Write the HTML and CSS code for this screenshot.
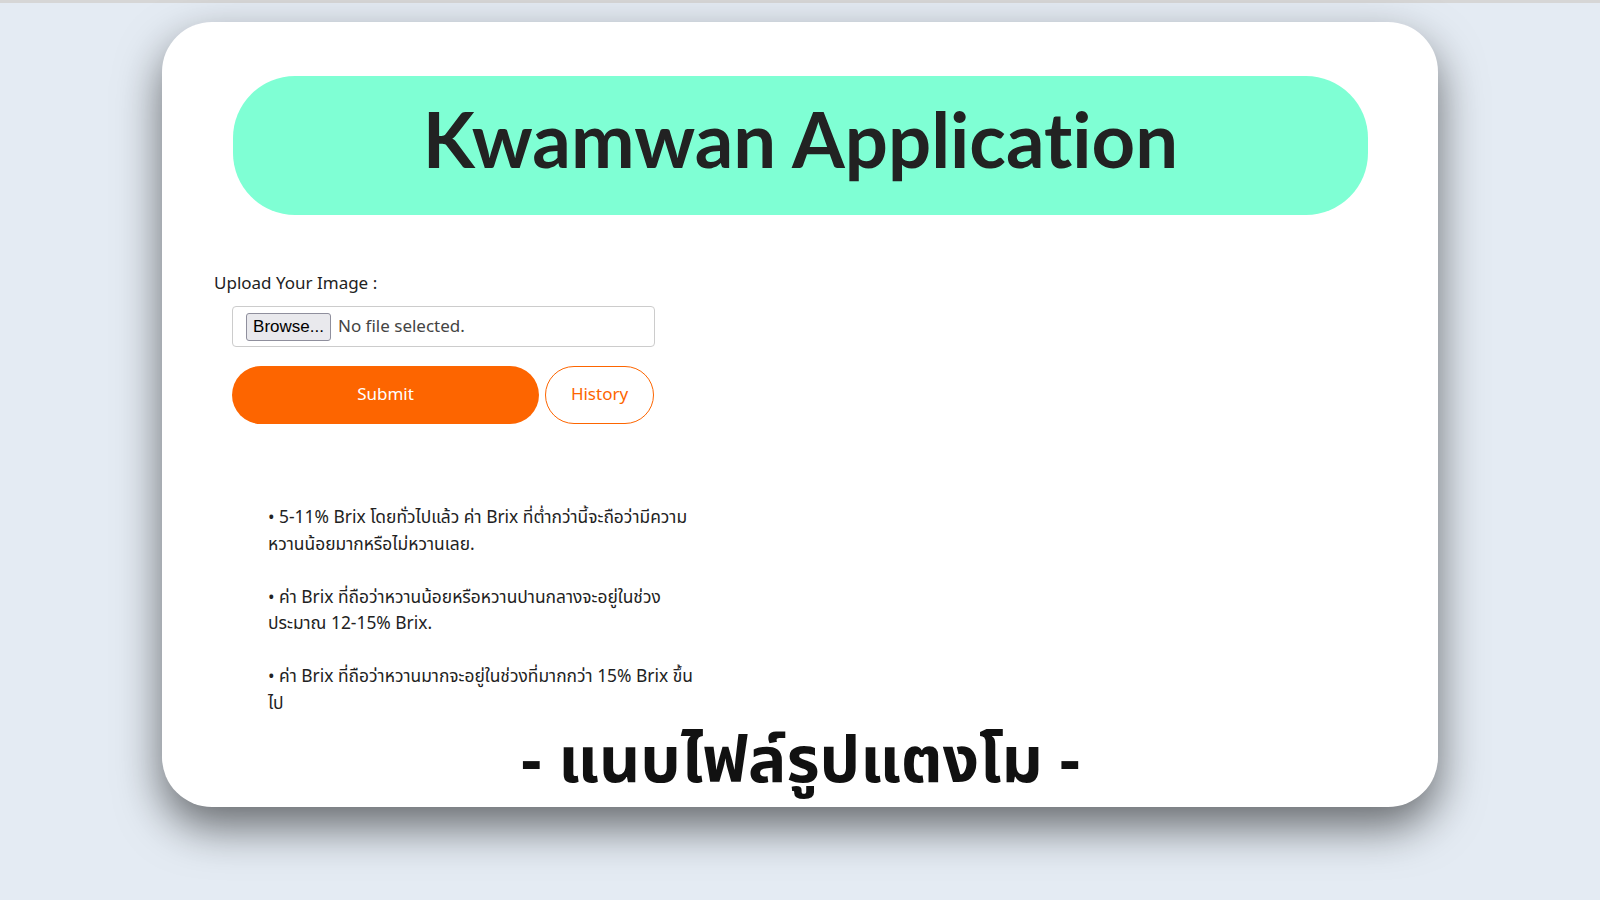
FILE: index.html
```html
<!DOCTYPE html>
<html lang="th">
<head>
<meta charset="utf-8">
<title>Kwamwan Application</title>
<link rel="stylesheet" href="styles.css">
</head>
<body>
<div class="topline"></div>
<main class="card">
  <header class="banner">
    <h1 class="title">Kwamwan Application</h1>
  </header>
  <form class="upload">
    <label class="upload-label">Upload Your Image :</label>
    <div class="file-box">
      <span class="browse">Browse...</span>
      <span class="file-status">No file selected.</span>
    </div>
    <div class="actions">
      <button type="button" class="btn-submit">Submit</button>
      <button type="button" class="btn-history">History</button>
    </div>
  </form>
  <div class="info">
    <p>• 5-11% Brix โดยทั่วไปแล้ว ค่า Brix ที่ต่ำกว่านี้จะถือว่ามีความหวานน้อยมากหรือไม่หวานเลย.</p>
    <p>• ค่า Brix ที่ถือว่าหวานน้อยหรือหวานปานกลางจะอยู่ในช่วงประมาณ 12-15% Brix.</p>
    <p>• ค่า Brix ที่ถือว่าหวานมากจะอยู่ในช่วงที่มากกว่า 15% Brix ขึ้นไป</p>
  </div>
  <h2 class="attach">- แนบไฟล์รูปแตงโม -</h2>
</main>
</body>
</html>
```
FILE: styles.css
```css
html, body {
  margin: 0;
  padding: 0;
}
body {
  background: #e4ebf3;
  height: 900px;
  overflow: hidden;
  font-family: "Noto Sans Thai", "Noto Sans", "Open Sans", sans-serif;
  color: #222;
}
.topline {
  height: 3px;
  background: #d6d6d6;
}
.card {
  box-sizing: border-box;
  width: 1276px;
  height: 785px;
  margin: 19px auto 0;
  padding: 54px 70px 0 71px;
  background: #fff;
  border-radius: 50px;
  box-shadow: 0 20px 45px rgba(0, 0, 0, 0.55);
  display: flex;
  flex-direction: column;
}
.banner {
  box-sizing: border-box;
  height: 139px;
  padding-bottom: 14px;
  background: #7fffd4;
  border-radius: 62px;
  display: flex;
  align-items: center;
  justify-content: center;
}
.title {
  margin: 0;
  font-family: "Lato", "Noto Sans", sans-serif;
  font-weight: 700;
  font-size: 76px;
  letter-spacing: 0;
  font-variant-ligatures: none;
  font-feature-settings: "liga" 0;
  color: #222;
  line-height: 1;
}
.upload {
  margin: 57px 0 0 -19px;
  display: flex;
  flex-direction: column;
}
.upload-label {
  font-size: 17px;
  color: #222;
  line-height: 24px;
}
.file-box {
  box-sizing: border-box;
  width: 423px;
  height: 41px;
  margin: 10px 0 0 18px;
  border: 1px solid #ccc;
  border-radius: 4px;
  display: flex;
  align-items: center;
  padding-left: 13px;
  gap: 7px;
}
.browse {
  box-sizing: border-box;
  height: 28px;
  width: 85px;
  border: 1px solid #8f8f9d;
  border-radius: 3px;
  background: #e9e9ed;
  font-family: "Liberation Sans", Arial, sans-serif;
  font-size: 17px;
  color: #000;
  display: flex;
  align-items: center;
  justify-content: center;
}
.file-status {
  font-size: 17px;
  color: #444;
}
.actions {
  display: flex;
  gap: 6px;
  margin: 19px 0 0 18px;
}
.btn-submit, .btn-history {
  height: 58px;
  border-radius: 29px;
  font-family: inherit;
  font-size: 17px;
  cursor: pointer;
}
.btn-submit {
  width: 307px;
  border: none;
  background: #fd6500;
  color: #fff;
}
.btn-history {
  width: 109px;
  background: #fff;
  border: 1px solid #fd6500;
  color: #fd6500;
}
.info {
  width: 430px;
  margin: 81px 0 0 35px;
  font-size: 17.4px;
  line-height: 26.5px;
  color: #222;
}
.info p {
  margin: 0 0 26.5px;
}
.info p:last-child {
  margin-bottom: 0;
}
.attach {
  margin: 8px 0 0;
  text-align: center;
  font-size: 64px;
  font-weight: 700;
  line-height: 76px;
  color: #111;
}
```
